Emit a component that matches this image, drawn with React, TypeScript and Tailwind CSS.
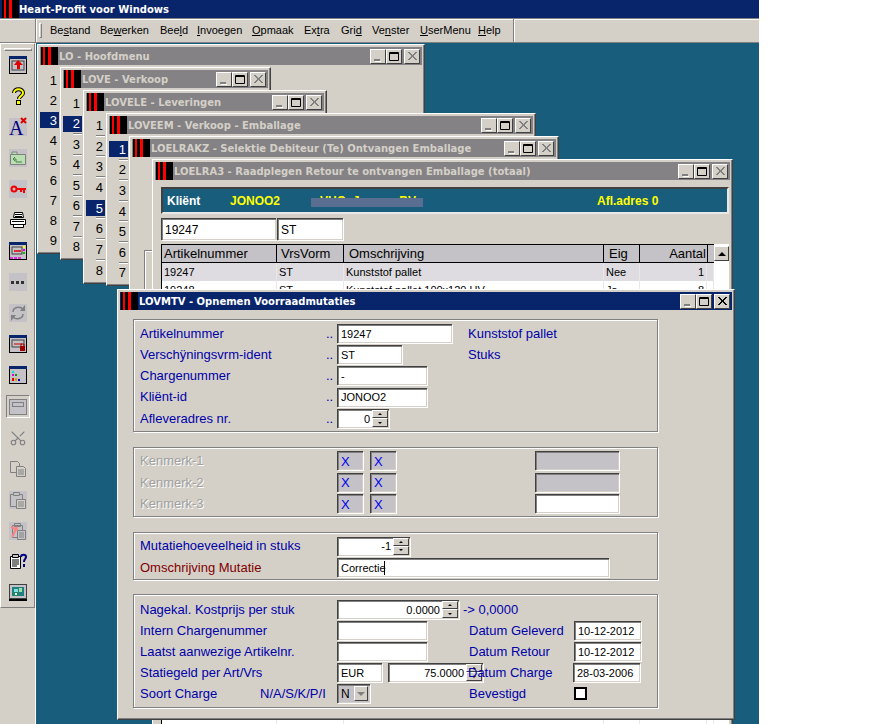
import type { ReactNode } from "react"
import { Scissors } from "lucide-react"

const raised =
  "border border-t-white border-l-white border-r-[#404040] border-b-[#404040] bg-[#d4d0c8]"

function Logo({ className = "" }: { className?: string }) {
  return (
    <svg width="17" height="18" viewBox="0 0 17 18" className={"shrink-0 " + className}>
      <rect width="17" height="18" fill="#000" />
      <rect x="2" width="2" height="18" fill="#f00" />
      <rect x="7" width="3" height="18" fill="#f00" />
    </svg>
  )
}

function TitleBtn({ kind, active }: { kind: "min" | "max" | "close"; active?: boolean }) {
  return (
    <div className={"flex h-[15px] w-[16px] items-center justify-center " + raised}>
      <svg width="14" height="13" viewBox="0 0 14 13">
        {kind === "min" ? (
          <>
            <rect x="3" y="9" width="6" height="2" fill="#808080" />
            <rect x="4" y="11" width="6" height="1" fill="#fff" />
          </>
        ) : null}
        {kind === "max" ? (
          <path d="M2.5 2.5h9v8h-9zM2.5 3.5h9" fill="none" stroke="#000" strokeWidth="1" />
        ) : null}
        {kind === "close" ? (
          <path
            d="M3 2l8 8M4 2l8 8M11 2l-8 8M12 2l-8 8"
            fill="none"
            stroke={active ? "#000" : "#808080"}
            strokeWidth="1"
          />
        ) : null}
      </svg>
    </div>
  )
}

function Win({
  className,
  title,
  active,
  children,
}: {
  className: string
  title: string
  active?: boolean
  children?: ReactNode
}) {
  return (
    <div
      className={
        "absolute overflow-hidden p-[2px] shadow-[inset_-1px_-1px_0_#808080] " + raised + " " + className
      }
    >
      <div
        className={
          "flex h-[18px] items-center pr-[2px] " + (active ? "bg-[#08246b]" : "bg-[#848284]")
        }
      >
        <Logo className="mr-[1px] ml-[1px]" />
        <span
          className={
            "flex-1 truncate font-['DejaVu_Sans',sans-serif] text-[10px] font-bold " +
            (active ? "text-white" : "text-[#d4d0c8]")
          }
        >
          {title}
        </span>
        <TitleBtn kind="min" />
        <TitleBtn kind="max" />
        <div className="w-[2px]" />
        <TitleBtn kind="close" active={active} />
      </div>
      {children}
    </div>
  )
}

function NumList({
  count,
  hi,
  lines,
  className,
  rowClass,
}: {
  count: number
  hi: number
  lines?: boolean
  className: string
  rowClass: string
}) {
  return (
    <div className={"flex w-[19px] flex-col text-[13px] text-black " + className}>
      {Array.from({ length: count }, (_, i) => i + 1).map((n) => (
        <div key={n} className={"relative flex items-center justify-end " + rowClass}>
          {lines && n > 1 && n !== hi ? (
            <div className="absolute top-[-1px] right-0 h-[2px] w-[9px] border-t border-t-[#808080] border-b border-b-white" />
          ) : null}
          <span
            className={
              "flex h-4 items-center justify-end pr-[2px] leading-none " +
              (n === hi ? "w-[19px] bg-[#08246b] text-white" : "w-full")
            }
          >
            {n}
          </span>
        </div>
      ))}
    </div>
  )
}

const sunken =
  "shadow-[inset_1px_1px_0_#404040,inset_2px_2px_0_#808080,inset_-1px_-1px_0_#d4d0c8,1px_1px_0_#fff,-1px_0_0_#d4d0c8]"

function Field({
  className,
  children,
  gray,
}: {
  className: string
  children?: ReactNode
  gray?: boolean
}) {
  return (
    <div
      className={
        "flex h-[19px] shrink-0 items-center px-[4px] pt-[1px] text-[11px] whitespace-nowrap text-black " +
        sunken +
        " " +
        (gray ? "bg-[#c4c2c6] " : "bg-white ") +
        className
      }
    >
      {children}
    </div>
  )
}

function Spin({ className, value }: { className: string; value: string }) {
  return (
    <div className={"flex h-[19px] shrink-0 items-center bg-white pr-[1px] text-[11px] text-black " + sunken + " " + className}>
      <span className="flex-1 pt-[1px] pr-[2px] text-right">{value}</span>
      <div className="flex w-[16px] flex-col">
        <div className={"flex h-[8px] items-center justify-center " + raised}>
          <span className="h-0 w-0 border-x-[2px] border-b-[2px] border-x-transparent border-b-black" />
        </div>
        <div className={"flex h-[9px] items-center justify-center " + raised}>
          <span className="h-0 w-0 border-x-[2px] border-t-[2px] border-x-transparent border-t-black" />
        </div>
      </div>
    </div>
  )
}

function Group({ className, children }: { className: string; children: ReactNode }) {
  return (
    <div
      className={
        "ml-[13px] flex w-[525px] flex-col border border-[#808080] pl-[6px] shadow-[1px_1px_0_#fff,inset_1px_1px_0_#fff] " +
        className
      }
    >
      {children}
    </div>
  )
}

function Label({ className = "", children }: { className?: string; children: ReactNode }) {
  return <span className={"shrink-0 text-[13px] whitespace-nowrap text-[#0000a8] " + className}>{children}</span>
}

function Dim({ children }: { children: ReactNode }) {
  return (
    <span className="w-[197px] shrink-0 text-[13px] text-[#a0a0a0] [text-shadow:1px_1px_0_#fff]">{children}</span>
  )
}

const winIcon = (inner: ReactNode) => (
  <svg width="18" height="18" viewBox="0 0 18 18">
    <rect x="0.5" y="0.5" width="17" height="17" fill="#c4c2c6" stroke="#000" />
    <rect width="18" height="3" fill="#08246b" />
    {inner}
  </svg>
)

const grayBox = (inner: ReactNode) => (
  <svg width="18" height="18" viewBox="0 0 18 18" className="overflow-visible">
    <rect width="18" height="18" fill="#c4c2c6" />
    {inner}
  </svg>
)

const toolIcons: ReactNode[] = [
  winIcon(
    <>
      <rect x="3" y="5" width="12" height="9" fill="none" stroke="#404040" />
      <path d="M9 4l5 5h-3v4H8V9H5z" fill="#e00000" />
    </>,
  ),
  <svg key="help" width="18" height="18" viewBox="0 0 18 18">
    <path d="M5 6c0-5 9-5 9 0 0 3-4 3-4 6" fill="none" stroke="#000" strokeWidth="4" />
    <path d="M5 6c0-5 9-5 9 0 0 3-4 3-4 6" fill="none" stroke="#ffff00" strokeWidth="2" />
    <rect x="7.5" y="13.5" width="4" height="4" fill="#ffff00" stroke="#000" />
  </svg>,
  grayBox(
    <>
      <text x="0" y="17" fontFamily="Liberation Serif" fontSize="20" fill="#000080">
        A
      </text>
      <path d="M12 0l5 5M17 0l-5 5" stroke="#e00000" strokeWidth="2" />
    </>,
  ),
  grayBox(
    <>
      <path d="M1.5 5.5h15v10h-15zM3 5V3h5v2" fill="#b8e0b0" stroke="#808080" />
      <path d="M6 8l-2 2 2 2M4 10h3v3h6" fill="none" stroke="#508050" />
    </>,
  ),
  grayBox(
    <>
      <circle cx="5" cy="9" r="2.5" fill="none" stroke="#f00000" strokeWidth="2" />
      <path d="M8 8h9v2h-1v3h-2v-3h-1v2h-2v-2H8z" fill="#f00000" />
    </>,
  ),
  <svg key="print" width="18" height="18" viewBox="0 0 18 18">
    <path d="M5.5 1.5h8l1 5h-10zM1.5 8.5h15v5h-15zM4.5 13.5h10v3h-10z" fill="#fff" stroke="#000" />
    <path d="M6 3.5h7M6 5.5h7M3 10.5h12" stroke="#000" />
  </svg>,
  winIcon(
    <>
      <rect x="3" y="5" width="10" height="7" fill="none" stroke="#404040" />
      <path d="M5 9h7" stroke="#e00000" strokeWidth="1.5" />
      <path d="M15 4v2" stroke="#ffff00" strokeWidth="2" />
      <path d="M15 7v2" stroke="#e000e0" strokeWidth="2" />
      <path d="M15 10v2" stroke="#00c000" strokeWidth="2" />
      <path d="M1 16h3M5 16h3M9 16h3" stroke="#e000e0" strokeWidth="1.5" />
    </>,
  ),
  grayBox(
    <>
      <rect x="2" y="8" width="3" height="3" fill="#303030" />
      <rect x="7" y="8" width="3" height="3" fill="#303030" />
      <rect x="12" y="8" width="3" height="3" fill="#303030" />
    </>,
  ),
  grayBox(
    <>
      <path d="M4 8c0-5 7-6 10-3M14 10c0 5-7 6-10 3" fill="none" stroke="#808080" strokeWidth="1.5" />
      <path d="M16 1v6h-5zM2 17v-6h5z" fill="#808080" />
    </>,
  ),
  winIcon(
    <>
      <rect x="3" y="5" width="12" height="7" fill="none" stroke="#404040" />
      <path d="M5 9h8" stroke="#c00000" />
      <path d="M11 11h5v5h-5z" fill="#a00000" />
      <path d="M12 11V9h3v2" fill="none" stroke="#a00000" />
    </>,
  ),
  winIcon(
    <>
      <rect x="3" y="5" width="2" height="2" fill="#00e0e0" />
      <rect x="3" y="8" width="2" height="2" fill="#e000e0" />
      <rect x="6" y="8" width="2" height="2" fill="#00a000" />
      <rect x="3" y="12" width="2" height="3" fill="#e00000" />
      <rect x="6" y="12" width="2" height="3" fill="#e0a000" />
      <rect x="9" y="13" width="2" height="2" fill="#0000c0" />
    </>,
  ),
]

const toolIconsB: ReactNode[] = [
  <Scissors key="cut" size={18} strokeWidth={1.5} className="-rotate-90 text-[#808080]" />,
  <svg key="copy" width="18" height="18" viewBox="0 0 18 18" fill="#d4d0c8" stroke="#808080">
    <path d="M1.5 1.5h7l2 2v9h-9z" />
    <path d="M7.5 6.5h7l2 2v8h-9z" />
    <path d="M9 10h6M9 12h6M9 14h6" />
  </svg>,
  grayBox(
    <g fill="#c4c2c6" stroke="#808080">
      <path d="M1.5 3.5h12v12h-12z" />
      <path d="M4.5 1.5h6v3h-6z" />
      <path d="M7.5 8.5h9v9h-9z" fill="#d4d0c8" />
      <path d="M9 11h6M9 13h6M9 15h6" />
    </g>,
  ),
  grayBox(
    <g fill="none" stroke="#808080">
      <path d="M3.5 3.5h10v12h-10z" />
      <path d="M5.5 1.5h6v3h-6z" />
      <path d="M8.5 8.5h8v9h-8z" fill="#c4c2c6" />
      <path d="M10 11h5M10 13h5M10 15h5" />
      <path d="M2 5l7 3M8 5L3 15" stroke="#ff8080" strokeWidth="2" />
    </g>,
  ),
  <svg key="doc" width="18" height="18" viewBox="0 0 18 18">
    <path d="M1.5 3.5h10v12h-10z" fill="#fff" stroke="#000" />
    <path d="M3.5 1.5h6v3h-6z" fill="#c4c2c6" stroke="#000" />
    <path d="M3 7h7M3 9h7M3 11h7M3 13h5" stroke="#000" />
    <path d="M12 4c0-3 5-3 5 0 0 2-2 2-2 5" fill="none" stroke="#000080" strokeWidth="2" />
    <rect x="14" y="11" width="2" height="3" fill="#000080" />
  </svg>,
  <svg key="mon" width="18" height="18" viewBox="0 0 18 18">
    <rect x="0.5" y="0.5" width="17" height="14" fill="#c4c2c6" stroke="#404040" />
    <rect x="3" y="3" width="12" height="9" fill="#208080" />
    <rect x="5" y="5" width="4" height="3" fill="#80e0e0" />
    <rect x="10" y="4" width="3" height="4" fill="#a0e0a0" />
    <rect x="6" y="9" width="2" height="2" fill="#ffff80" />
    <rect y="15" width="18" height="2" fill="#000" />
  </svg>,
]

const menuItems = [
  ["Be", "s", "tand", "w-[50px]"],
  ["Be", "w", "erken", "w-[60px]"],
  ["Bee", "l", "d", "w-[37px]"],
  ["", "I", "nvoegen", "w-[55px]"],
  ["", "O", "pmaak", "w-[52px]"],
  ["Ex", "t", "ra", "w-[37px]"],
  ["Gri", "d", "", "w-[31px]"],
  ["Ve", "n", "ster", "w-[48px]"],
  ["", "U", "serMenu", "w-[58px]"],
  ["", "H", "elp", "w-[30px]"],
]

const tableRows = [
  ["19247", "ST", "Kunststof pallet", "Nee", "1"],
  ["19248", "ST", "Kunststof pallet 100x120 UV", "Ja", "8"],
]

const cell = "flex items-center overflow-hidden whitespace-nowrap px-[2px] border-r border-r-[#e8e8e8]"

export default function App() {
  return (
    <div className="relative h-[724px] w-[896px] overflow-hidden bg-white font-['Liberation_Sans',Arial,sans-serif]">
      <div className="flex h-full w-[759px] flex-col bg-[#d4d0c8]">
        <div className="flex h-[18px] items-center bg-[#08246b] pl-[2px]">
          <Logo />
          <span className="font-['DejaVu_Sans',sans-serif] text-[10px] font-bold text-white">
            Heart-Profit voor Windows
          </span>
        </div>

        <div className="flex h-[25px] border-t border-t-[#808080] border-b border-b-[#808080] shadow-[inset_0_1px_0_#fff]">
          <div className="w-[36px] border-r border-r-[#808080]" />
          <div className="flex w-[478px] items-center border-r border-r-[#808080] border-l border-l-white pl-[2px] text-[11px] text-black">
            <div className="mr-[8px] h-[15px] w-[3px] border border-t-white border-l-white border-r-[#808080] border-b-[#808080]" />
            {menuItems.map(([a, u, b, w]) => (
              <span key={a + u + b} className={"shrink-0 " + w}>
                {a}
                <u>{u}</u>
                {b}
              </span>
            ))}
          </div>
          <div className="flex-1 border-l border-l-white" />
        </div>

        <div className="flex min-h-0 flex-1">
          <div className="flex w-[36px] shrink-0 flex-col border-r border-r-white">
            <div className="flex h-[565px] w-[35px] flex-col items-center border-t border-t-white border-r border-r-[#808080] border-b border-b-[#808080] border-l border-l-white pt-[4px]">
              <div className="h-[3px] w-[28px] border border-t-white border-l-white border-r-[#808080] border-b-[#808080]" />
              <div className="mt-[5px] flex flex-col gap-[13px]">
                {toolIcons.map((ic, i) => (
                  <div key={i} className="flex h-[18px] w-[18px] items-center justify-center">
                    {ic}
                  </div>
                ))}
              </div>
              <div className="mt-[11px] flex h-[23px] w-[24px] items-center justify-center border border-t-[#808080] border-l-[#808080] border-r-white border-b-white">
                <svg width="18" height="16" viewBox="0 0 18 16">
                  <rect x="0.5" y="0.5" width="17" height="15" fill="#c4c2c6" stroke="#808080" />
                  <rect x="3.5" y="3.5" width="11" height="4" fill="none" stroke="#808080" />
                </svg>
              </div>
              <div className="mt-[11px] flex flex-col gap-[13px]">
                {toolIconsB.map((ic, i) => (
                  <div key={i} className="flex h-[18px] w-[18px] items-center justify-center">
                    {ic}
                  </div>
                ))}
              </div>
            </div>
          </div>
          <div className="flex-1 bg-[#195d7c]" />
        </div>
      </div>

      <Win className="top-[44px] left-[37px] h-[210px] w-[388px]" title="LO - Hoofdmenu">
        <NumList count={9} hi={3} className="mt-[5px]" rowClass="h-[20px]" />
      </Win>

      <Win className="top-[67px] left-[60px] h-[193px] w-[211px]" title="LOVE - Verkoop">
        <NumList count={8} hi={2} lines className="mt-[5px]" rowClass="h-[20.5px]" />
      </Win>

      <Win className="top-[90px] left-[83px] h-[194px] w-[244px]" title="LOVELE - Leveringen">
        <NumList count={8} hi={5} lines className="mt-[4px]" rowClass="h-[20.7px]" />
      </Win>

      <Win className="top-[113px] left-[106px] h-[173px] w-[430px]" title="LOVEEM - Verkoop - Emballage">
        <NumList count={7} hi={1} lines className="mt-[5px]" rowClass="h-[20.6px]" />
      </Win>

      <Win
        className="top-[136px] left-[129px] h-[200px] w-[430px]"
        title="LOELRAKZ - Selektie Debiteur (Te) Ontvangen Emballage"
      >
        <div className="mt-[94px] ml-[13px] h-[100px] w-[20px] border-t border-l border-t-white border-l-white shadow-[-1px_-1px_0_#808080]" />
      </Win>

      <Win
        className="top-[159px] left-[152px] h-[600px] w-[581px]"
        title="LOELRA3 - Raadplegen Retour te ontvangen Emballage (totaal)"
      >
        <div className="relative mt-[7px] ml-[6px] flex h-[27px] w-[568px] items-center border-2 border-t-[#404040] border-r-[#e8e8e8] border-b-[#e8e8e8] border-l-[#404040] bg-[#195d7c] text-[12px] font-bold">
          <span className="ml-[4px] w-[63px] text-white">Kliënt</span>
          <span className="w-[81px] text-[#ffff00]">JONOO2</span>
          <span className="absolute top-[3px] left-[157px] whitespace-pre text-[#ffff00]">VHO  Ja          BV</span>
          <div className="absolute top-[9px] left-[148px] h-[9px] w-[112px] bg-[#5a6e92]" />
          <span className="absolute left-[434px] text-[#ffff00]">Afl.adres 0</span>
        </div>

        <div className="mt-[4px] ml-[6px] flex gap-[1px]">
          <Field className="h-[22px]! w-[115px] text-[12px]!">19247</Field>
          <Field className="h-[22px]! w-[66px] text-[12px]!">ST</Field>
        </div>

        <div className="mt-[4px] ml-[6px] flex w-[568px]">
          <div className="flex w-[553px] flex-col border-t border-l border-black text-[11px] text-black">
            <div className="flex h-[18px] border-b border-b-black bg-[#c4c2c6] text-[13px]">
              <div className="flex w-[115px] items-center border-r border-r-black px-[2px]">Artikelnummer</div>
              <div className="flex w-[67px] items-center border-r border-r-black px-[4px]">VrsVorm</div>
              <div className="flex w-[260px] items-center border-r border-r-black px-[5px]">Omschrijving</div>
              <div className="flex w-[36px] items-center border-r border-r-black px-[5px]">Eig</div>
              <div className="flex w-[67px] items-center justify-end px-[1px]">Aantal</div>
              <div className="w-[7px] border-l border-l-black" />
            </div>
            {tableRows.map((r, i) => (
              <div key={r[0]} className={"flex h-[18px] " + (i === 0 ? "bg-[#dedce0]" : "bg-white")}>
                <div className={cell + " w-[115px]"}>{r[0]}</div>
                <div className={cell + " w-[67px]"}>{r[1]}</div>
                <div className={cell + " w-[260px]"}>{r[2]}</div>
                <div className={cell + " w-[36px]"}>{r[3]}</div>
                <div className={cell + " w-[67px] justify-end"}>{r[4]}</div>
                <div className="w-[7px] border-r border-r-[#e8e8e8]" />
              </div>
            ))}
            <div className="flex h-[440px] bg-white">
              <div className={cell + " w-[115px]"} />
              <div className={cell + " w-[67px]"} />
              <div className={cell + " w-[260px]"} />
              <div className={cell + " w-[36px]"} />
              <div className={cell + " w-[67px]"} />
              <div className="w-[7px] border-r border-r-[#e8e8e8]" />
            </div>
          </div>
          <div className="w-[15px] bg-white pt-[2px]">
            <div className={"flex h-[15px] items-center justify-center " + raised}>
              <span className="h-0 w-0 border-x-[4px] border-b-[4px] border-x-transparent border-b-black" />
            </div>
          </div>
        </div>
      </Win>

      <Win
        active
        className="top-[289px] left-[117px] h-[431px] w-[618px]"
        title="LOVMTV - Opnemen Voorraadmutaties"
      >
        <Group className="mt-[9px] h-[113px] pt-[3px]">
          <div className="flex h-[21px] items-center">
            <Label className="w-[186px]">Artikelnummer</Label>
            <Label className="w-[11px]">..</Label>
            <Field className="w-[115px]">19247</Field>
            <Label className="ml-[16px]">Kunststof pallet</Label>
          </div>
          <div className="flex h-[21px] items-center">
            <Label className="w-[186px]">Verschÿningsvrm-ident</Label>
            <Label className="w-[11px]">..</Label>
            <Field className="w-[65px]">ST</Field>
            <Label className="ml-[66px]">Stuks</Label>
          </div>
          <div className="flex h-[21px] items-center">
            <Label className="w-[186px]">Chargenummer</Label>
            <Label className="w-[11px]">..</Label>
            <Field className="w-[90px]">-</Field>
          </div>
          <div className="flex h-[22px] items-center">
            <Label className="w-[186px]">Kliënt-id</Label>
            <Label className="w-[11px]">..</Label>
            <Field className="w-[90px]">JONOO2</Field>
          </div>
          <div className="flex h-[21px] items-center">
            <Label className="w-[186px]">Afleveradres nr.</Label>
            <Label className="w-[11px]">..</Label>
            <Spin className="w-[52px]" value="0" />
          </div>
        </Group>

        <Group className="mt-[15px] h-[70px] pt-[2px]">
          {["Kenmerk-1", "Kenmerk-2", "Kenmerk-3"].map((k, i) => (
            <div key={k} className="flex h-[21.5px] items-center">
              <Dim>{k}</Dim>
              <Field gray className="w-[26px] text-[13px]! text-[#0000f0]!">
                X
              </Field>
              <Field gray className="ml-[7px] w-[26px] text-[13px]! text-[#0000f0]!">
                X
              </Field>
              <Field gray={i < 2} className="ml-[139px] w-[84px]" />
            </div>
          ))}
        </Group>

        <Group className="mt-[15px] h-[48px] pt-[2px]">
          <div className="flex h-[22px] items-center">
            <Label className="w-[197px]">Mutatiehoeveelheid in stuks</Label>
            <Spin className="w-[73px]" value="-1" />
          </div>
          <div className="flex h-[21px] items-center">
            <Label className="w-[197px] text-[#800000]!">Omschrijving Mutatie</Label>
            <Field className="w-[272px]">
              Correctie
              <span className="-ml-[2px] h-[14px] w-[1px] bg-black" />
            </Field>
          </div>
        </Group>

        <Group className="mt-[14px] h-[114px] pt-[4px]">
          <div className="flex h-[21px] items-center">
            <Label className="w-[197px]">Nagekal. Kostprijs per stuk</Label>
            <Spin className="w-[122px]" value="0.0000" />
            <Label className="ml-[4px]">-&gt; 0,0000</Label>
          </div>
          <div className="flex h-[21px] items-center">
            <Label className="w-[197px]">Intern Chargenummer</Label>
            <Field className="w-[90px]" />
            <Label className="ml-[42px] w-[105px]">Datum Geleverd</Label>
            <Field className="w-[67px]">10-12-2012</Field>
          </div>
          <div className="flex h-[21px] items-center">
            <Label className="w-[197px]">Laatst aanwezige Artikelnr.</Label>
            <Field className="w-[90px]" />
            <Label className="ml-[42px] w-[105px]">Datum Retour</Label>
            <Field className="w-[67px]">10-12-2012</Field>
          </div>
          <div className="flex h-[21px] items-center">
            <Label className="w-[197px]">Statiegeld per Art/Vrs</Label>
            <Field className="w-[45px]">EUR</Field>
            <Spin className="ml-[6px] w-[95px]" value="75.0000" />
            <Label className="relative -ml-[15px] w-[105px]">Datum Charge</Label>
            <Field className="w-[67px]">28-03-2006</Field>
          </div>
          <div className="flex h-[21px] items-center">
            <Label className="w-[120px]">Soort Charge</Label>
            <Label className="w-[77px]">N/A/S/K/P/I</Label>
            <div className={"flex h-[19px] w-[33px] items-center bg-[#c4c2c6] pr-[2px] pl-[4px] text-[12px] text-black " + sunken}>
              <span className="flex-1">N</span>
              <div className={"flex h-[15px] w-[14px] items-center justify-center " + raised}>
                <span className="h-0 w-0 border-x-[4px] border-t-[4px] border-x-transparent border-t-[#808080]" />
              </div>
            </div>
            <Label className="ml-[99px] w-[105px]">Bevestigd</Label>
            <div className="h-[13px] w-[13px] border-2 border-black bg-white" />
          </div>
        </Group>
      </Win>
    </div>
  )
}
